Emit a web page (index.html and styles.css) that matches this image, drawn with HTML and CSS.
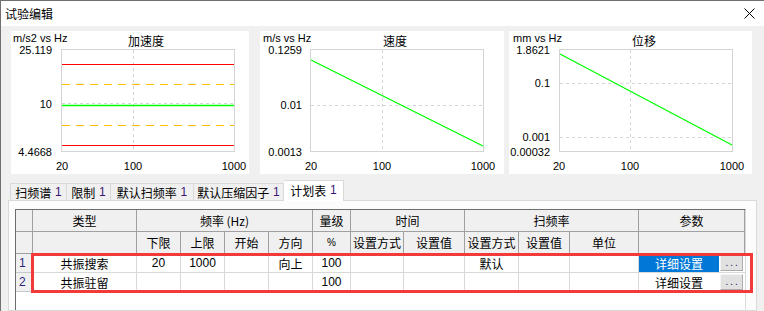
FILE: index.html
```html
<!DOCTYPE html>
<html lang="zh">
<head>
<meta charset="utf-8">
<title>试验编辑</title>
<link rel="stylesheet" href="styles.css">
</head>
<body>
<div class="window">
  <div class="titlebar">
    <span class="title">试验编辑</span>
    <svg class="close" width="11" height="11" viewBox="0 0 11 11"><path d="M0.5 0.5 L10.5 10.5 M10.5 0.5 L0.5 10.5"/></svg>
  </div>
  <div class="content">
    <div class="charts">
      <div class="chart chart-acc">
        <svg width="238" height="143" viewBox="0 0 238 143">
          <text class="unit" x="2" y="11">m/s2 vs Hz</text>
          <text class="ctitle" x="135" y="15" text-anchor="middle">加速度</text>
          <rect class="frame" x="50.5" y="18.5" width="173" height="102"/>
          <line class="grid" x1="122.5" y1="19" x2="122.5" y2="120"/>
          <line class="grid" x1="51" y1="72.5" x2="223" y2="72.5"/>
          <line class="red" x1="51" y1="33.5" x2="223" y2="33.5"/>
          <line class="orange" x1="51" y1="53.5" x2="223" y2="53.5"/>
          <line class="green" x1="51" y1="74.5" x2="223" y2="74.5"/>
          <line class="orange" x1="51" y1="94.5" x2="223" y2="94.5"/>
          <line class="red" x1="51" y1="114.5" x2="223" y2="114.5"/>
          <text class="axis" x="41" y="23" text-anchor="end">25.119</text>
          <text class="axis" x="41" y="77" text-anchor="end">10</text>
          <text class="axis" x="41" y="125" text-anchor="end">4.4668</text>
          <text class="axis" x="51" y="139" text-anchor="middle">20</text>
          <text class="axis" x="122" y="139" text-anchor="middle">100</text>
          <text class="axis" x="223" y="139" text-anchor="middle">1000</text>
        </svg>
      </div>
      <div class="chart chart-vel">
        <svg width="244" height="143" viewBox="0 0 244 143">
          <text class="unit" x="3" y="11">m/s vs Hz</text>
          <text class="ctitle" x="135" y="15" text-anchor="middle">速度</text>
          <rect class="frame" x="50.5" y="18.5" width="173" height="102"/>
          <line class="grid" x1="122.5" y1="19" x2="122.5" y2="120"/>
          <line class="grid" x1="51" y1="74.5" x2="223" y2="74.5"/>
          <line class="green" x1="51" y1="29" x2="223" y2="115"/>
          <text class="axis" x="42" y="23" text-anchor="end">0.1259</text>
          <text class="axis" x="42" y="78" text-anchor="end">0.01</text>
          <text class="axis" x="42" y="125" text-anchor="end">0.0013</text>
          <text class="axis" x="51" y="139" text-anchor="middle">20</text>
          <text class="axis" x="122" y="139" text-anchor="middle">100</text>
          <text class="axis" x="223" y="139" text-anchor="middle">1000</text>
        </svg>
      </div>
      <div class="chart chart-disp">
        <svg width="243" height="143" viewBox="0 0 243 143">
          <text class="unit" x="4" y="11">mm vs Hz</text>
          <text class="ctitle" x="135" y="15" text-anchor="middle">位移</text>
          <rect class="frame" x="50.5" y="18.5" width="173" height="102"/>
          <line class="grid" x1="121.5" y1="19" x2="121.5" y2="120"/>
          <line class="grid" x1="51" y1="52.5" x2="223" y2="52.5"/>
          <line class="grid" x1="51" y1="106.5" x2="223" y2="106.5"/>
          <line class="green" x1="51" y1="23" x2="223" y2="114"/>
          <text class="axis" x="41" y="23" text-anchor="end">1.8621</text>
          <text class="axis" x="41" y="56" text-anchor="end">0.1</text>
          <text class="axis" x="41" y="110" text-anchor="end">0.001</text>
          <text class="axis" x="41" y="125" text-anchor="end">0.00032</text>
          <text class="axis" x="50" y="139" text-anchor="middle">20</text>
          <text class="axis" x="121" y="139" text-anchor="middle">100</text>
          <text class="axis" x="223" y="139" text-anchor="middle">1000</text>
        </svg>
      </div>
    </div>

    <div class="tabs">
      <div class="tab tab-spec">扫频谱 <span class="num">1</span></div>
      <div class="tab tab-limit">限制 <span class="num">1</span></div>
      <div class="tab tab-rate">默认扫频率 <span class="num">1</span></div>
      <div class="tab tab-comp">默认压缩因子 <span class="num">1</span></div>
      <div class="tab tab-plan active">计划表 <span class="num">1</span></div>
    </div>

    <div class="tabpanel">
      <div class="gridview">
        <table class="plan">
          <colgroup>
            <col class="c-rh"><col class="c-type"><col class="c-44"><col class="c-44"><col class="c-44"><col class="c-44"><col class="c-lvl"><col class="c-tm"><col class="c-tv"><col class="c-sm"><col class="c-sv"><col class="c-unit"><col class="c-par">
          </colgroup>
          <thead>
            <tr class="h1">
              <th class="rh"></th>
              <th>类型</th>
              <th colspan="4">频率 (Hz)</th>
              <th>量级</th>
              <th colspan="2">时间</th>
              <th colspan="3">扫频率</th>
              <th>参数</th>
            </tr>
            <tr class="h2">
              <th class="rh"></th>
              <th></th>
              <th>下限</th>
              <th>上限</th>
              <th>开始</th>
              <th>方向</th>
              <th class="pct">%</th>
              <th>设置方式</th>
              <th>设置值</th>
              <th>设置方式</th>
              <th>设置值</th>
              <th>单位</th>
              <th></th>
            </tr>
          </thead>
          <tbody>
            <tr>
              <td class="rh">1</td>
              <td>共振搜索</td>
              <td>20</td>
              <td>1000</td>
              <td></td>
              <td>向上</td>
              <td>100</td>
              <td></td>
              <td></td>
              <td>默认</td>
              <td></td>
              <td></td>
              <td class="par"><div class="parbox"><span class="parval selected">详细设置</span><span class="dots">...</span></div></td>
            </tr>
            <tr>
              <td class="rh">2</td>
              <td>共振驻留</td>
              <td></td>
              <td></td>
              <td></td>
              <td></td>
              <td>100</td>
              <td></td>
              <td></td>
              <td></td>
              <td></td>
              <td></td>
              <td class="par"><div class="parbox"><span class="parval">详细设置</span><span class="dots">...</span></div></td>
            </tr>
          </tbody>
        </table>
        <div class="highlight"></div>
      </div>
    </div>
  </div>
</div>
</body>
</html>
```

FILE: styles.css
```css
html, body {
  margin: 0;
  padding: 0;
}
body {
  width: 764px;
  height: 311px;
  overflow: hidden;
  background: #f0f0f0;
  font-family: "Liberation Sans", "Noto Sans CJK SC", sans-serif;
  font-size: 12px;
  color: #000;
}
.window {
  height: 311px;
  box-sizing: border-box;
  border-top: 1px solid #707070;
  border-left: 1px solid #707070;
  background: #f0f0f0;
  display: flex;
  flex-direction: column;
}
.titlebar {
  flex: none;
  height: 25px;
  background: #fff;
  display: flex;
  align-items: center;
  justify-content: space-between;
  padding: 0 9px 0 4px;
}
.title {
  font-family: "Noto Sans CJK SC", sans-serif;
  font-size: 12px;
}
.close path {
  stroke: #000;
  stroke-width: 1;
  fill: none;
}
.content {
  flex: 1;
  min-height: 0;
  display: flex;
  flex-direction: column;
  padding-top: 5px;
}
.charts {
  display: flex;
  margin-left: 10px;
  flex: none;
}
.chart {
  background: #fff;
  height: 143px;
}
.chart svg {
  display: block;
}
.chart-vel { margin-left: 11px; }
.chart-disp { margin-left: 5px; }

.unit, .axis {
  font-family: "Liberation Sans", sans-serif;
  font-size: 11px;
  fill: #000;
}
.ctitle {
  font-family: "Noto Sans CJK SC", sans-serif;
  font-size: 12px;
  fill: #000;
}
.frame {
  fill: none;
  stroke: #d4d4d4;
  stroke-width: 1;
}
.grid {
  stroke: #d6d6d6;
  stroke-width: 1;
  stroke-dasharray: 3 3;
}
.red { stroke: #ff0000; stroke-width: 1; }
.orange { stroke: #ffc000; stroke-width: 1; stroke-dasharray: 8 6; }
.green { stroke: #00ff00; stroke-width: 1.3; }

.tabs {
  flex: none;
  display: flex;
  align-items: flex-end;
  height: 21px;
  margin: 5px 0 0 9px;
  position: relative;
  z-index: 2;
}
.tab {
  height: 17px;
  box-sizing: border-box;
  border: 1px solid #d9d9d9;
  border-bottom: none;
  border-right: none;
  background: #f0f0f0;
  display: flex;
  align-items: center;
  justify-content: center;
  font-family: "Noto Sans CJK SC", sans-serif;
  font-size: 12px;
  white-space: pre;
}
.tab-spec { width: 56px; }
.tab-limit { width: 44px; }
.tab-rate { width: 83px; }
.tab-comp { width: 91px; border-right: 1px solid #d9d9d9; }
.tab .num {
  font-family: "Liberation Sans", sans-serif;
  color: #3a1670;
  margin-left: 1px;
}
.tab.active {
  width: 60px;
  height: 21px;
  margin-bottom: -1px;
  background: #fff;
  border-right: 1px solid #d9d9d9;
  border-left: none;
  padding-bottom: 2px;
}
.tabpanel {
  flex: 1;
  min-height: 0;
  width: 749px;
  box-sizing: border-box;
  margin-left: 7px;
  border: 1px solid #d9d9d9;
  background: #fcfcfc;
  padding: 8px 10px 0 6px;
  display: flex;
}
.gridview {
  position: relative;
  flex: none;
  width: 731px;
  box-sizing: border-box;
  border-left: 1px solid #6d6d6d;
  border-top: 1px solid #6d6d6d;
  border-right: 1px solid #dadada;
  background: #fff;
}
.plan {
  table-layout: fixed;
  border-collapse: separate;
  border-spacing: 0;
  width: 729px;
  font-size: 12px;
}
.c-rh { width: 17px; }
.c-type { width: 104px; }
.c-44 { width: 44px; }
.c-lvl { width: 38px; }
.c-tm { width: 53px; }
.c-tv { width: 61px; }
.c-sm { width: 54px; }
.c-sv { width: 51px; }
.c-unit { width: 69px; }
.c-par { width: 106px; }

.plan th, .plan td {
  box-sizing: border-box;
  padding: 0;
  text-align: center;
  white-space: nowrap;
  overflow: hidden;
}
.plan th {
  height: 22px;
  background: #f0f0f0;
  font-weight: normal;
  font-family: "Noto Sans CJK SC", sans-serif;
  border-right: 1px solid #a0a0a0;
  border-bottom: 1px solid #a0a0a0;
}
.plan th.pct {
  font-family: "Liberation Sans", sans-serif;
  font-size: 10px;
}
.plan td {
  height: 19px;
  border-right: 1px solid #d9d9d9;
  border-bottom: 1px solid #d9d9d9;
  font-family: "Liberation Sans", "Noto Sans CJK SC", sans-serif;
  font-size: 12px;
}
.plan td.rh {
  background: #f0f0f0;
  text-align: left;
  padding-left: 3px;
  color: #2b1f7a;
  border-right: 1px solid #a0a0a0;
  border-bottom: 1px solid #c8c8c8;
}
.plan td.par {
  border-right: none;
}
.parbox {
  display: flex;
  height: 18px;
  align-items: stretch;
}
.parval {
  width: 80px;
  display: flex;
  align-items: center;
  justify-content: center;
  font-family: "Noto Sans CJK SC", sans-serif;
}
.parval.selected {
  background: #0078d7;
  color: #fff;
}
.dots {
  width: 23px;
  height: 16px;
  margin: 1px 0 0 1px;
  box-sizing: border-box;
  background: #e1e1e1;
  border: 1px solid #adadad;
  border-top-color: #f4f4f4;
  border-left-color: #f4f4f4;
  font-size: 10px;
  line-height: 14px;
  letter-spacing: 2px;
  padding-left: 2px;
  text-align: center;
  color: #1a1a5a;
}
.highlight {
  position: absolute;
  left: 15px;
  top: 43px;
  width: 722px;
  height: 40px;
  box-sizing: border-box;
  border: 3px solid #f23a3a;
  pointer-events: none;
}
```
